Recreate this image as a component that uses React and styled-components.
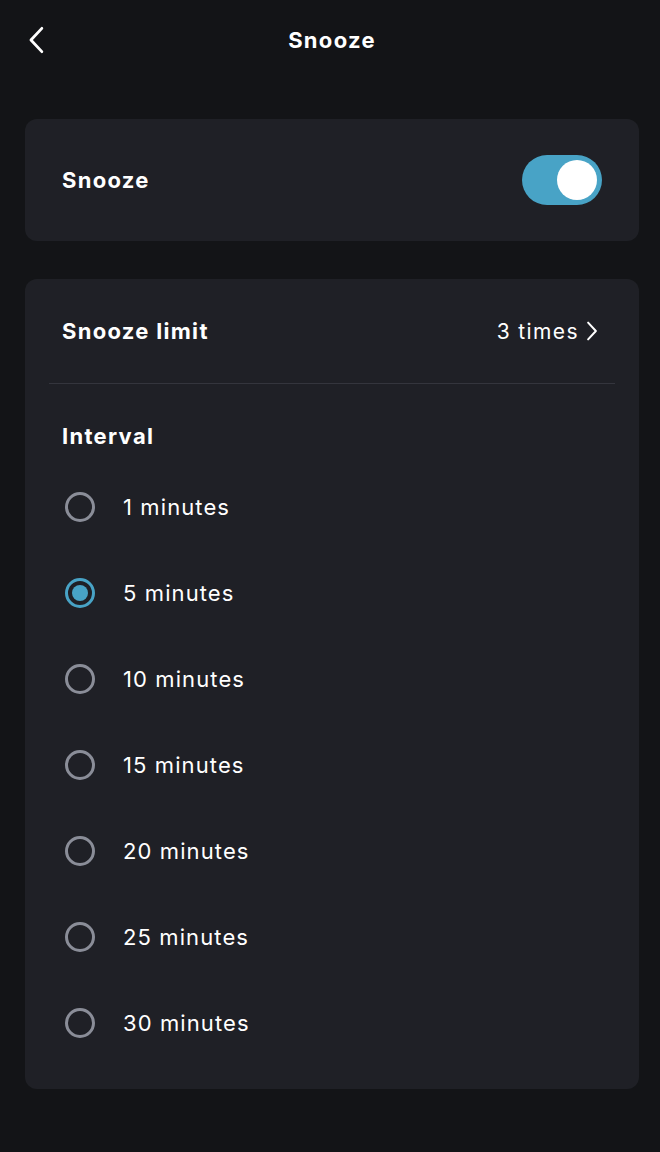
import React, { useState } from 'react';
import styled, { createGlobalStyle } from 'styled-components';

const GlobalStyle = createGlobalStyle`
  html, body {
    margin: 0;
    padding: 0;
    background: #131417;
  }
  body {
    font-family: Inter, "Noto Sans", sans-serif;
    color: #ffffff;
  }
`;

const Page = styled.div`
  width: 660px;
  min-height: 1152px;
  background: #131417;
  display: flex;
  flex-direction: column;
`;

const Header = styled.header`
  height: 80px;
  display: flex;
  align-items: center;
  justify-content: center;
  position: relative;
`;

const BackButton = styled.button`
  position: absolute;
  left: 20px;
  top: 22px;
  width: 32px;
  height: 36px;
  border: none;
  background: none;
  padding: 0;
  display: flex;
  align-items: center;
  justify-content: center;
  cursor: pointer;
`;

const Title = styled.h1`
  margin: 0 0 0 4px;
  font-size: 22px;
  font-weight: 700;
  letter-spacing: 1.3px;
`;

const Content = styled.main`
  padding: 39px 21px 0 25px;
  display: flex;
  flex-direction: column;
  gap: 38px;
`;

const Card = styled.section`
  background: #1f2026;
  border-radius: 12px;
`;

const Row = styled.div`
  height: ${(p) => p.$height || 122}px;
  display: flex;
  align-items: center;
  justify-content: space-between;
  padding: 0 37px;
`;

const Label = styled.span`
  font-size: 22px;
  font-weight: 700;
  letter-spacing: 1.3px;
`;

const Value = styled.span`
  display: flex;
  align-items: center;
  gap: 7px;
  font-size: 21px;
  font-weight: 400;
  letter-spacing: 1.4px;
  margin-right: 4px;
`;

const Track = styled.button`
  width: 80px;
  height: 50px;
  border-radius: 25px;
  border: none;
  padding: 5px;
  background: ${(p) => (p.$on ? '#48a3c6' : '#4a4c55')};
  display: flex;
  justify-content: ${(p) => (p.$on ? 'flex-end' : 'flex-start')};
  cursor: pointer;
`;

const Knob = styled.span`
  width: 40px;
  height: 40px;
  border-radius: 50%;
  background: #ffffff;
`;

const Divider = styled.hr`
  margin: 0 24px;
  border: none;
  height: 1px;
  background: #34353d;
`;

const SectionTitle = styled.div`
  padding: 38px 37px 0;
  height: 27px;
  display: flex;
  align-items: center;
  font-size: 22px;
  font-weight: 700;
  letter-spacing: 1.3px;
`;

const Options = styled.ul`
  list-style: none;
  margin: 0;
  padding: 15px 0 23px;
`;

const Option = styled.li`
  height: 86px;
  display: flex;
  align-items: center;
  gap: 28px;
  padding: 0 40px;
  cursor: pointer;
`;

const Radio = styled.span`
  width: 30px;
  height: 30px;
  box-sizing: border-box;
  border-radius: 50%;
  border: 3px solid ${(p) => (p.$checked ? '#48a3c6' : '#8a8d98')};
  display: flex;
  align-items: center;
  justify-content: center;

  &::after {
    content: '';
    width: 16px;
    height: 16px;
    border-radius: 50%;
    background: #48a3c6;
    display: ${(p) => (p.$checked ? 'block' : 'none')};
  }
`;

const OptionText = styled.span`
  font-size: 22px;
  font-weight: 400;
  letter-spacing: 1.1px;
`;

const Chevron = ({ dir = 'right', size = 16 }) => (
  <svg width={size * 0.6} height={size} viewBox="0 0 10 18" fill="none">
    <path
      d={dir === 'right' ? 'M1.5 1.5 L8.5 9 L1.5 16.5' : 'M8.5 1.5 L1.5 9 L8.5 16.5'}
      stroke="#ffffff"
      strokeWidth="1.8"
      strokeLinecap="round"
      strokeLinejoin="round"
    />
  </svg>
);

const intervals = [1, 5, 10, 15, 20, 25, 30];

export default function App() {
  const [snooze, setSnooze] = useState(true);
  const [interval, setInterval] = useState(5);

  return (
    <Page>
      <GlobalStyle />
      <Header>
        <BackButton aria-label="Back">
          <Chevron dir="left" size={28} />
        </BackButton>
        <Title>Snooze</Title>
      </Header>
      <Content>
        <Card>
          <Row>
            <Label>Snooze</Label>
            <Track $on={snooze} onClick={() => setSnooze(!snooze)}>
              <Knob />
            </Track>
          </Row>
        </Card>
        <Card>
          <Row $height={104}>
            <Label>Snooze limit</Label>
            <Value>
              3 times <Chevron size={20} />
            </Value>
          </Row>
          <Divider />
          <SectionTitle>Interval</SectionTitle>
          <Options>
            {intervals.map((m) => (
              <Option key={m} onClick={() => setInterval(m)}>
                <Radio $checked={interval === m} />
                <OptionText>{m} minutes</OptionText>
              </Option>
            ))}
          </Options>
        </Card>
      </Content>
    </Page>
  );
}
